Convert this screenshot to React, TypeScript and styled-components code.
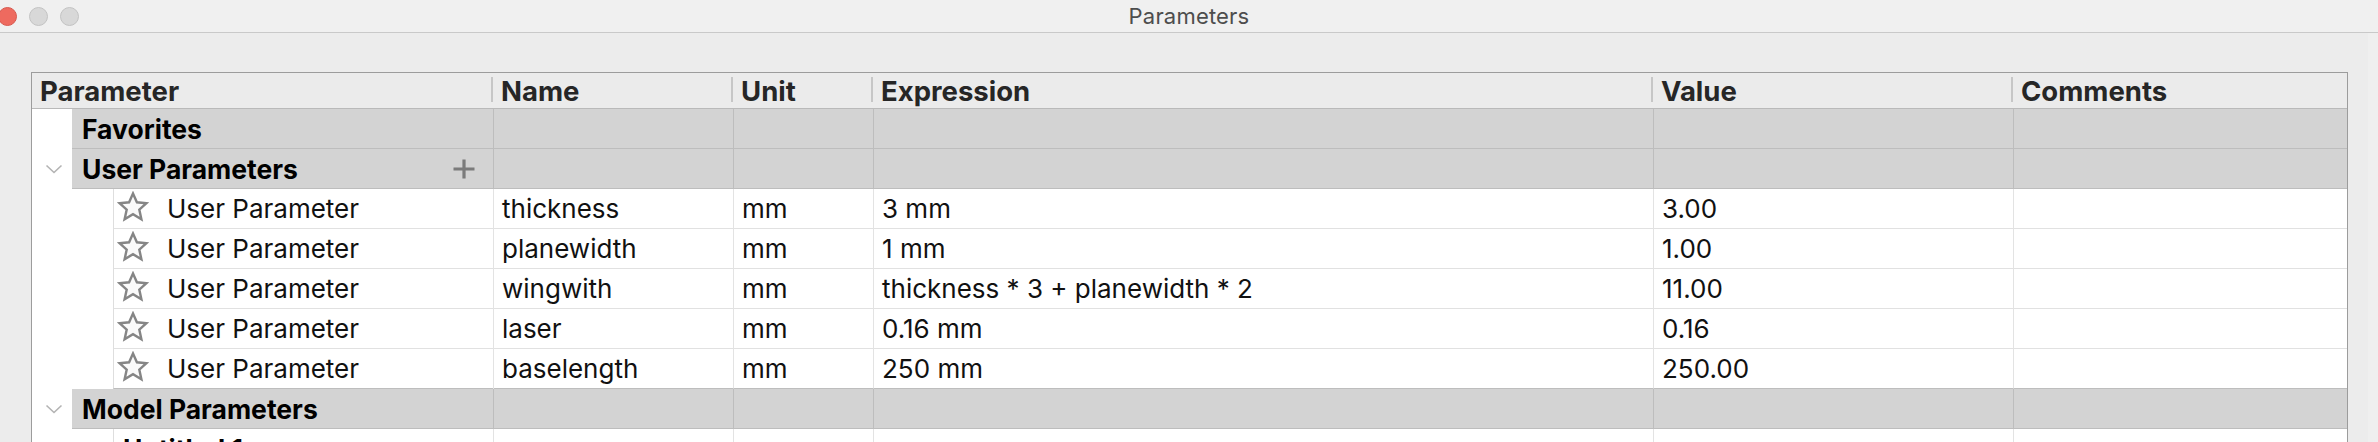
import React from "react";
import styled, { createGlobalStyle, css } from "styled-components";

const GlobalStyle = createGlobalStyle`
  html, body {
    margin: 0;
    padding: 0;
    background: #ececec;
  }
  body {
    font-family: Inter, "Liberation Sans", Arial, sans-serif;
    overflow: hidden;
  }
`;

const colWidths = [462, 240, 140, 780, 360, 333];
const gridCols = colWidths.map((w) => `${w}px`).join(" ");

const columns = ["Parameter", "Name", "Unit", "Expression", "Value", "Comments"];

type Kind = "group" | "param" | "item";

type RowData =
  | { kind: "group"; label: string; chevron?: boolean; add?: boolean }
  | {
      kind: "param";
      name: string;
      unit: string;
      expr: string;
      value: string;
    }
  | { kind: "item"; label: string };

const rows: RowData[] = [
  { kind: "group", label: "Favorites" },
  { kind: "group", label: "User Parameters", chevron: true, add: true },
  { kind: "param", name: "thickness", unit: "mm", expr: "3 mm", value: "3.00" },
  { kind: "param", name: "planewidth", unit: "mm", expr: "1 mm", value: "1.00" },
  {
    kind: "param",
    name: "wingwith",
    unit: "mm",
    expr: "thickness * 3 + planewidth * 2",
    value: "11.00",
  },
  { kind: "param", name: "laser", unit: "mm", expr: "0.16 mm", value: "0.16" },
  { kind: "param", name: "baselength", unit: "mm", expr: "250 mm", value: "250.00" },
  { kind: "group", label: "Model Parameters", chevron: true },
  { kind: "item", label: "Untitled 1" },
];

const Window = styled.div`
  width: 2378px;
  height: 442px;
  display: flex;
  flex-direction: column;
  background: #ececec;
  overflow: hidden;
`;

const TitleBar = styled.div`
  flex: none;
  height: 32px;
  background: #f0f0f0;
  border-bottom: 1px solid #c9c9c9;
  display: grid;
  grid-template-columns: 1fr auto 1fr;
  align-items: center;
`;

const Lights = styled.div`
  display: flex;
  gap: 12px;
  align-items: center;
  margin-left: -2px;
`;

const Light = styled.span<{ $color: string; $ring: string }>`
  width: 19px;
  height: 19px;
  border-radius: 50%;
  box-sizing: border-box;
  background: ${(p) => p.$color};
  border: 1px solid ${(p) => p.$ring};
`;

const Title = styled.div`
  font-size: 22px;
  color: #4d4d4d;
  letter-spacing: 0.2px;
`;

const Body = styled.div`
  flex: 1;
  display: flex;
  min-height: 0;
`;

const Main = styled.div`
  flex: 1;
  padding: 39px 0 0 31px;
`;

const EdgeStrip = styled.div`
  width: 10px;
  background: #efefef;
`;

const Table = styled.div`
  width: 2317px;
  box-sizing: border-box;
  border: 1px solid #9c9c9c;
  border-bottom: none;
  background: #ffffff;
`;

const HeaderRow = styled.div`
  display: grid;
  grid-template-columns: ${gridCols};
  background: #ebebeb;
  border-bottom: 1px solid #b9b9b9;
`;

const HeaderCell = styled.div<{ $divider: boolean }>`
  position: relative;
  height: 35px;
  display: flex;
  align-items: center;
  padding-left: ${(p) => (p.$divider ? 7 : 8)}px;
  font-size: 27.5px;
  font-weight: 700;
  color: #262626;

  ${(p) =>
    p.$divider &&
    css`
      &::before {
        content: "";
        position: absolute;
        left: -3px;
        top: 4px;
        width: 2px;
        height: 25px;
        background: #c6c6c6;
      }
    `}
`;

const Row = styled.div`
  display: grid;
  grid-template-columns: ${gridCols};
  height: 40px;
`;

const lineColor = (kind: Kind, beforeGroup: boolean) =>
  kind === "group" || beforeGroup ? "#bdbdbd" : "#e1e1e1";

const Cell = styled.div<{ $kind: Kind; $last: boolean; $beforeGroup: boolean }>`
  box-sizing: border-box;
  display: flex;
  align-items: center;
  padding-left: 8px;
  font-size: 26px;
  color: #111;
  white-space: nowrap;
  overflow: hidden;
  background: ${(p) => (p.$kind === "group" ? "#d3d3d3" : "#ffffff")};
  border-bottom: 1px solid ${(p) => lineColor(p.$kind, p.$beforeGroup)};
  border-right: ${(p) =>
    p.$last ? "none" : `1px solid ${p.$kind === "group" ? "#bdbdbd" : "#e3e3e3"}`};
`;

const FirstCell = styled.div<{ $kind: Kind }>`
  display: flex;
  box-sizing: border-box;
  border-right: 1px solid ${(p) => (p.$kind === "group" ? "#bdbdbd" : "#e3e3e3")};
  background: #ffffff;
`;

const Gutter = styled.div<{ $width: number }>`
  flex: none;
  width: ${(p) => p.$width}px;
  display: flex;
  align-items: center;
  justify-content: center;
  padding-left: 3px;
  box-sizing: border-box;
`;

const Inner = styled.div<{ $kind: Kind; $beforeGroup: boolean }>`
  flex: 1;
  min-width: 0;
  display: flex;
  align-items: center;
  box-sizing: border-box;
  padding-left: ${(p) => (p.$kind === "group" ? 10 : p.$kind === "item" ? 9 : 3)}px;
  padding-right: 18px;
  background: ${(p) => (p.$kind === "group" ? "#d3d3d3" : "#ffffff")};
  border-bottom: 1px solid ${(p) => lineColor(p.$kind, p.$beforeGroup)};
  border-left: ${(p) => (p.$kind === "group" ? "none" : "1px solid #dedede")};
  font-size: ${(p) => (p.$kind === "param" ? 26 : 26.5)}px;
  font-weight: ${(p) => (p.$kind === "param" ? 400 : 700)};
  color: ${(p) => (p.$kind === "param" ? "#111" : "#000")};
  white-space: nowrap;
`;

const Label = styled.span`
  flex: 1;
`;

const StarWrap = styled.span`
  display: flex;
  width: 32px;
  height: 32px;
  margin-right: 18px;
  margin-top: -3px;
`;

const Chevron = () => (
  <svg width="18" height="10" viewBox="0 0 18 10">
    <polyline
      points="1.5,1.5 9,8.5 16.5,1.5"
      fill="none"
      stroke="#b3b3b3"
      strokeWidth="1.6"
    />
  </svg>
);

const Plus = () => (
  <svg width="22" height="20" viewBox="0 0 22 20">
    <path d="M11 0.5 V19.5 M0.5 10 H21.5" stroke="#7b7b7b" strokeWidth="3.2" />
  </svg>
);

const Star = () => (
  <StarWrap>
    <svg width="32" height="32" viewBox="0 0 32 32">
      <polygon
        points="16,2.5 19.9,11.3 29.5,12.2 22.3,18.6 24.4,28.2 16,23.2 7.6,28.2 9.7,18.6 2.5,12.2 12.1,11.3"
        fill="#fafafa"
        stroke="#858585"
        strokeWidth="2.4"
        strokeLinejoin="miter"
      />
    </svg>
  </StarWrap>
);

const ParamTable = () => (
  <Table>
    <HeaderRow>
      {columns.map((c, i) => (
        <HeaderCell key={c} $divider={i > 0}>
          {c}
        </HeaderCell>
      ))}
    </HeaderRow>
    {rows.map((row, idx) => {
      const beforeGroup = rows[idx + 1]?.kind === "group";
      const rest =
        row.kind === "param"
          ? [row.name, row.unit, row.expr, row.value, ""]
          : ["", "", "", "", ""];
      return (
        <Row key={idx}>
          <FirstCell $kind={row.kind}>
            <Gutter $width={row.kind === "group" ? 40 : 81}>
              {row.kind === "group" && row.chevron && <Chevron />}
            </Gutter>
            <Inner $kind={row.kind} $beforeGroup={beforeGroup}>
              {row.kind === "param" && <Star />}
              <Label>{row.kind === "param" ? "User Parameter" : row.label}</Label>
              {row.kind === "group" && row.add && <Plus />}
            </Inner>
          </FirstCell>
          {rest.map((text, i) => (
            <Cell
              key={i}
              $kind={row.kind}
              $last={i === rest.length - 1}
              $beforeGroup={beforeGroup}
            >
              {text}
            </Cell>
          ))}
        </Row>
      );
    })}
  </Table>
);

const App = () => (
  <>
    <GlobalStyle />
    <Window>
      <TitleBar>
        <Lights>
          <Light $color="#ee6a5f" $ring="#d8584e" />
          <Light $color="#d8d8d8" $ring="#c3c3c3" />
          <Light $color="#d8d8d8" $ring="#c3c3c3" />
        </Lights>
        <Title>Parameters</Title>
        <span />
      </TitleBar>
      <Body>
        <Main>
          <ParamTable />
        </Main>
        <EdgeStrip />
      </Body>
    </Window>
  </>
);

export default App;
